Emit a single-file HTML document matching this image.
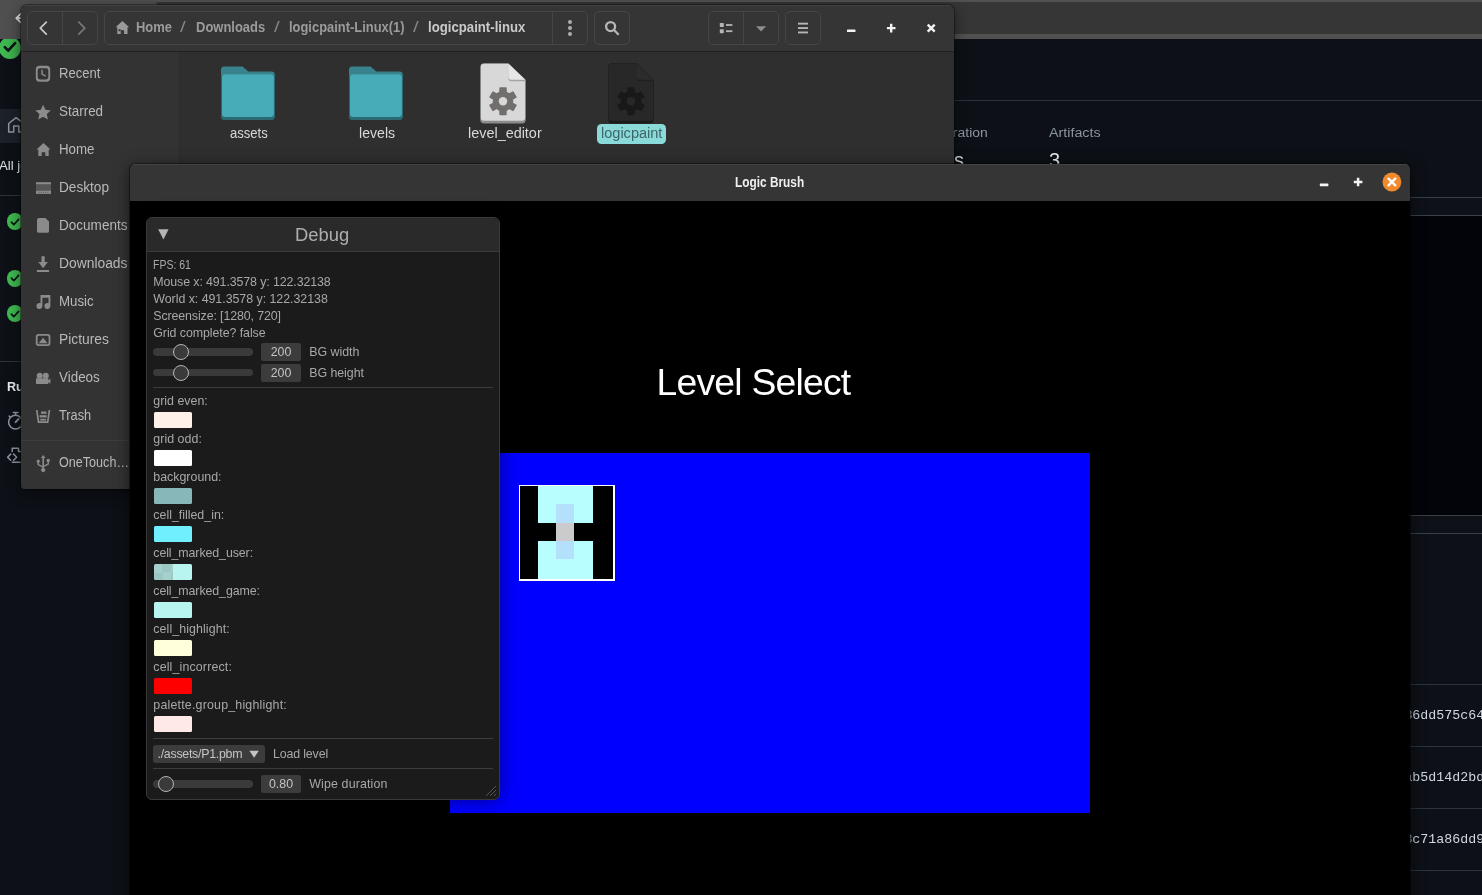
<!DOCTYPE html>
<html lang="en">
<head>
<meta charset="utf-8">
<title>Logic Brush</title>
<style>
html,body{margin:0;padding:0}
body{width:1482px;height:895px;overflow:hidden;position:relative;background:#0d1117;font-family:"Liberation Sans",sans-serif;}
.abs{position:absolute}
#bg,#fm,#lb{will-change:transform}
/* ---------- browser page behind ---------- */
#bg{position:absolute;left:0;top:0;width:1482px;height:895px;overflow:hidden;font-family:"Liberation Sans",sans-serif}
#bg .strip{position:absolute;left:0;top:0;width:1482px;height:39px;background:#363636;border-top:2px solid #515151;border-bottom:5px solid #515151;box-sizing:border-box}
#bg .tab{position:absolute;left:0;top:0;width:158px;height:38.5px;background:#4f4f4f;border-radius:0 8px 0 0}
#bg .hl{position:absolute;height:1px;background:#2d333b}
#bg .mono{position:absolute;font-family:"Liberation Mono",monospace;font-size:13.3px;line-height:16px;color:#d0d7de;white-space:nowrap}
#bg .ok{position:absolute;border-radius:50%;background:#3fb950}
/* ---------- file manager ---------- */
#fm{position:absolute;left:21px;top:5px;width:933px;height:484px;border-radius:6px 6px 4px 4px;background:#2f2f2f;box-shadow:0 0 0 1px rgba(0,0,0,.35),0 4px 14px rgba(0,0,0,.55);overflow:hidden;font-family:"Liberation Sans",sans-serif}
#fm .hdr{position:absolute;left:0;top:0;width:933px;height:46px;background:#353535;border-bottom:1px solid #202020;box-shadow:inset 0 1px 0 #424242}
#fm .btn{position:absolute;top:6px;height:34px;border:1px solid #464646;border-radius:5px;box-sizing:border-box}
#fm .vd{position:absolute;top:7px;width:1px;height:32px;background:#464646}
#fm .side{position:absolute;left:0;top:47px;width:157px;height:437px;background:#333}
#fm .si{position:absolute;left:38px;font-size:14.2px;color:#bdbdbd;white-space:nowrap;line-height:18px}
#fm .pt{position:absolute;top:13px;font-size:14.2px;line-height:18px;color:#a9a9a9;white-space:nowrap;font-weight:bold}
#fm .fl{position:absolute;top:119px;font-size:14.2px;line-height:18px;color:#d6d6d6;white-space:nowrap;transform:translateX(-50%)}
/* ---------- logic brush ---------- */
#lb{position:absolute;left:130px;top:164px;width:1280px;height:760px;border-radius:5px 5px 0 0;background:#000;box-shadow:0 0 0 1px rgba(0,0,0,.4),0 3px 16px rgba(0,0,0,.6);overflow:hidden}
#lb .tb{position:absolute;left:0;top:0;width:1280px;height:37px;background:#353535;box-shadow:inset 0 1px 0 #444}
#lb .ttl{position:absolute;left:0;top:9px;width:1278px;text-align:center;font-size:14.2px;font-weight:bold;color:#ececec;line-height:18px}
#dbg{position:absolute;left:16px;top:53px;width:354px;height:583px;box-sizing:border-box;background:#1b1b1b;border:1px solid #3a3a3a;border-radius:6px;box-shadow:0 0 18px rgba(0,0,0,.45);color:#a8a8a8;font-size:12.4px}
#dbg .dt{position:absolute;left:0;top:0;width:352px;height:33px;background:#2a2a2a;border-bottom:1px solid #3a3a3a;border-radius:5px 5px 0 0}
#dbg .t{position:absolute;left:6px;white-space:nowrap;line-height:16px}
#dbg .sw{position:absolute;left:6.6px;width:38.6px;height:16.6px;border-radius:1.5px}
#dbg .sep{position:absolute;left:6px;width:340px;height:1px;background:#3c3c3c}
#dbg .trk{position:absolute;left:6px;width:100px;height:7.4px;border-radius:4px;background:#3a3a3a}
#dbg .knob{position:absolute;width:14px;height:14px;border-radius:50%;background:#3a3a3a;border:1px solid #b4b4b4}
#dbg .val{position:absolute;left:114px;width:40px;height:17.5px;border-radius:2px;background:#3c3c3c;text-align:center;line-height:18.6px;color:#c4c4c4}
</style>
</head>
<body>
<div id="bg">
  <div class="strip"></div>
  <div class="tab"></div>
  <svg class="abs" style="left:0;top:0" width="40" height="39" viewBox="0 0 40 39"><path d="M21.200 13.400l-5 4.700 5 4.700M16.200 18.100h12" stroke="#dedede" stroke-width="1.700" fill="none" stroke-linecap="round" stroke-linejoin="round"/></svg>
  <div class="abs" style="left:-4px;top:38.500px;width:30px;height:22px;overflow:hidden"><div class="ok" style="left:3px;top:-1.200px;width:22px;height:22px;background:linear-gradient(90deg,#40bb51,#3aa84a)"></div></div>
  <svg class="abs" style="left:0;top:38px" width="24" height="24" viewBox="0 38 24 24"><path d="M4.800 47.200l3.400 3.500 6.900 -7.500" stroke="#0d1117" stroke-width="2.600" fill="none" stroke-linecap="round" stroke-linejoin="round"/></svg>
  <div class="abs" style="left:-8px;top:108.700px;width:60px;height:34px;border-radius:6px;background:#1c2129"></div>
  <svg class="abs" style="left:0;top:110px" width="30" height="30" viewBox="0 110 30 30"><path d="M16.100 117.700l-7.400 5.800v8.600h5v-6.100h5.100v6.100h5v-8.600z" stroke="#8f96a0" stroke-width="1.500" fill="none" stroke-linejoin="round"/></svg>
  <div class="abs" style="left:-1px;top:156.500px;font-size:13.200px;line-height:18px;color:#dfe3e8;white-space:nowrap">All jobs</div>
  <div class="hl" style="left:0;top:195px;width:130px"></div>
  <div class="ok" style="left:6.600px;top:213.4px;width:16.800px;height:16.800px"></div>
  <svg class="abs" style="left:6px;top:212.8px" width="18" height="18" viewBox="-9 -9 18 18"><path d="M-3.600 0.200l2.400 2.500 4.800 -5.300" stroke="#0d1117" stroke-width="1.700" fill="none" stroke-linecap="round" stroke-linejoin="round"/></svg>
  <div class="ok" style="left:6.600px;top:269.8px;width:16.800px;height:16.800px"></div>
  <svg class="abs" style="left:6px;top:269.2px" width="18" height="18" viewBox="-9 -9 18 18"><path d="M-3.600 0.200l2.400 2.500 4.800 -5.300" stroke="#0d1117" stroke-width="1.700" fill="none" stroke-linecap="round" stroke-linejoin="round"/></svg>
  <div class="ok" style="left:6.600px;top:305.2px;width:16.800px;height:16.800px"></div>
  <svg class="abs" style="left:6px;top:304.6px" width="18" height="18" viewBox="-9 -9 18 18"><path d="M-3.600 0.200l2.400 2.500 4.800 -5.300" stroke="#0d1117" stroke-width="1.700" fill="none" stroke-linecap="round" stroke-linejoin="round"/></svg>
  <div class="hl" style="left:0;top:361px;width:130px"></div>
  <div class="abs" style="left:7px;top:378px;font-size:12.600px;line-height:18px;font-weight:bold;color:#e6edf3;white-space:nowrap">Run details</div>
  <svg class="abs" style="left:4px;top:400px" width="30" height="70" viewBox="4 400 30 70"><g stroke="#8d96a0" stroke-width="1.500" fill="none" stroke-linecap="round" stroke-linejoin="round"><circle cx="15.500" cy="422.100" r="6.900"/><path d="M13.300 412.500h4.700M15.600 412.700v2.300M9.200 416.100l0.900 0.900"/><path d="M15.600 422.100l2.800 -3" stroke-width="2.100"/><path d="M10.700 454.100l-3.100 3.100 3.100 3.100M13.600 454.100l3.100 3.100 -3.100 3.100M12.200 451.600v-3.400h6.300v3.300h4M12.400 462.200h10"/></g></svg>
  <div class="hl" style="left:954px;top:100px;width:528px;background:#2b313a"></div>
  <div class="abs" style="left:935.2px;top:123.500px;font-size:12px;line-height:18px;color:#8b949e;white-space:nowrap;transform-origin:0 50%;transform:scaleX(1.163)">Duration</div>
  <div style="position:absolute;left:1048.8px;top:123.5px;font-size:12px;line-height:18px;white-space:nowrap;transform-origin:0 50%;transform:scaleX(1.1902);color:#8b949e;">Artifacts</div>
  <div class="abs" style="left:954.100px;top:147.500px;font-size:20px;line-height:24px;color:#e6edf3;white-space:nowrap">s</div>
  <div class="abs" style="left:1049px;top:147.500px;font-size:20px;line-height:24px;color:#e6edf3;white-space:nowrap">3</div>
  <div class="abs" style="left:1400px;top:197px;width:82px;height:19px;background:#0e1218;border-top:1px solid #3a404a;border-bottom:1px solid #3a404a;box-sizing:border-box"></div>
  <div class="abs" style="left:1400px;top:216px;width:82px;height:299px;background:#020409"></div>
  <div class="abs" style="left:1400px;top:515px;width:82px;height:19px;background:#0e1218;border-top:1px solid #3a404a;border-bottom:1px solid #3a404a;box-sizing:border-box"></div>
  <div class="hl" style="left:1400px;top:684px;width:82px"></div>
  <div class="hl" style="left:1400px;top:746px;width:82px"></div>
  <div class="hl" style="left:1400px;top:808px;width:82px"></div>
  <div class="hl" style="left:1400px;top:870px;width:82px"></div>
  <div class="mono" style="left:1404.400px;top:708.0px">86dd575c64</div>
  <div class="mono" style="left:1404.400px;top:770.1px">ab5d14d2bd</div>
  <div class="mono" style="left:1404.400px;top:832.2px">8c71a86dd9</div>
</div>
<div id="fm">
  <div class="hdr"></div>
  <div class="btn" style="left:6px;width:71px"></div>
  <div class="vd" style="left:41px"></div>
  <div class="btn" style="left:83.2px;width:483.4px"></div>
  <div class="vd" style="left:531px"></div>
  <div class="btn" style="left:573.1px;width:35.5px"></div>
  <div class="btn" style="left:687.2px;width:70.7px"></div>
  <div class="vd" style="left:722px"></div>
  <div class="btn" style="left:764.3px;width:35.3px"></div>
  <svg class="abs" style="left:0;top:0" width="933" height="46" viewBox="21 5 933 46">
  <path d="M46.3 22.2L40.3 28.1l6 6" stroke="#c6c6c6" stroke-width="1.8" fill="none" stroke-linecap="round" stroke-linejoin="round"/>
  <path d="M78.8 22.2l6 5.9-6 6" stroke="#777" stroke-width="1.8" fill="none" stroke-linecap="round" stroke-linejoin="round"/>
  <path d="M122.4 21l6.8 6.3h-1.7v6.7h-3.4v-3.8h-3.4v3.800h-3.400v-6.700h-1.7z" fill="#9a9a9a"/>
  <rect x="118.600" y="29.2" width="2" height="2" fill="#353535"/>
  <circle cx="570" cy="22.100" r="2" fill="#adadad"/><circle cx="570" cy="28" r="2" fill="#adadad"/><circle cx="570" cy="33.900" r="2" fill="#adadad"/>
  <circle cx="610.600" cy="26.600" r="4.500" stroke="#b6b6b6" stroke-width="2.300" fill="none"/>
  <path d="M614 30l4.700 4.700" stroke="#b6b6b6" stroke-width="2.300"/>
  <rect x="719.8" y="23" width="4" height="4" rx="0.6" fill="#b4b4b4"/><rect x="726" y="24.1" width="6.4" height="1.8" fill="#b4b4b4"/>
  <rect x="719.8" y="29.2" width="4" height="4" rx="0.6" fill="#b4b4b4"/><rect x="726" y="30.3" width="6.4" height="1.8" fill="#b4b4b4"/>
  <path d="M756 26.2h10.2l-5.1 5.200z" fill="#8e8e8e"/>
  <rect x="798" y="22.7" width="10" height="1.9" fill="#b4b4b4"/><rect x="798" y="27.1" width="10" height="1.900" fill="#b4b4b4"/><rect x="798" y="31.5" width="10" height="1.900" fill="#b4b4b4"/>
  <rect x="847" y="29.400" width="8.5" height="2.700" rx="0.5" fill="#f2f2f2"/>
  <path d="M886.900 28.100h8.600M891.200 23.800v8.600" stroke="#f2f2f2" stroke-width="2.400"/>
  <path d="M927.700 24.600l7 7M934.700 24.600l-7 7" stroke="#f2f2f2" stroke-width="2.400"/>
</svg>
  <div style="position:absolute;left:114.6px;top:13.2px;font-size:14.2px;line-height:18px;white-space:nowrap;transform-origin:0 50%;transform:scaleX(0.9126);color:#9b9b9b;font-weight:bold;">Home</div>
  <div style="position:absolute;left:159.2px;top:13.2px;font-size:14.2px;line-height:18px;white-space:nowrap;transform-origin:0 50%;transform:scaleX(1.4464);color:#858585;">/</div>
  <div style="position:absolute;left:174.5px;top:13.2px;font-size:14.2px;line-height:18px;white-space:nowrap;transform-origin:0 50%;transform:scaleX(0.9151);color:#9b9b9b;font-weight:bold;">Downloads</div>
  <div style="position:absolute;left:252.5px;top:13.2px;font-size:14.2px;line-height:18px;white-space:nowrap;transform-origin:0 50%;transform:scaleX(1.4464);color:#858585;">/</div>
  <div style="position:absolute;left:267.7px;top:13.2px;font-size:14.2px;line-height:18px;white-space:nowrap;transform-origin:0 50%;transform:scaleX(0.9102);color:#9b9b9b;font-weight:bold;">logicpaint-Linux(1)</div>
  <div style="position:absolute;left:391.9px;top:13.2px;font-size:14.2px;line-height:18px;white-space:nowrap;transform-origin:0 50%;transform:scaleX(1.4464);color:#858585;">/</div>
  <div style="position:absolute;left:406.9px;top:13.2px;font-size:14.2px;line-height:18px;white-space:nowrap;transform-origin:0 50%;transform:scaleX(0.9293);color:#c9c9c9;font-weight:bold;">logicpaint-linux</div>
  <div class="side"></div>
  <div class="abs" style="left:0;top:434.5px;width:157px;height:1px;background:#3d3d3d"></div>
  <div style="position:absolute;left:38.0px;top:59.0px;font-size:14px;line-height:18px;white-space:nowrap;transform-origin:0 50%;transform:scaleX(0.9307);color:#b9b9b9;">Recent</div>
  <div style="position:absolute;left:38.0px;top:97.0px;font-size:14px;line-height:18px;white-space:nowrap;transform-origin:0 50%;transform:scaleX(0.9602);color:#b9b9b9;">Starred</div>
  <div style="position:absolute;left:38.0px;top:135.0px;font-size:14px;line-height:18px;white-space:nowrap;transform-origin:0 50%;transform:scaleX(0.9502);color:#b9b9b9;">Home</div>
  <div style="position:absolute;left:38.0px;top:173.0px;font-size:14px;line-height:18px;white-space:nowrap;transform-origin:0 50%;transform:scaleX(0.9733);color:#b9b9b9;">Desktop</div>
  <div style="position:absolute;left:38.0px;top:211.0px;font-size:14px;line-height:18px;white-space:nowrap;transform-origin:0 50%;transform:scaleX(0.9672);color:#b9b9b9;">Documents</div>
  <div style="position:absolute;left:37.9px;top:249.0px;font-size:14px;line-height:18px;white-space:nowrap;transform-origin:0 50%;transform:scaleX(0.9888);color:#b9b9b9;">Downloads</div>
  <div style="position:absolute;left:38.0px;top:287.0px;font-size:14px;line-height:18px;white-space:nowrap;transform-origin:0 50%;transform:scaleX(0.9487);color:#b9b9b9;">Music</div>
  <div style="position:absolute;left:37.9px;top:325.0px;font-size:14px;line-height:18px;white-space:nowrap;transform-origin:0 50%;transform:scaleX(0.9864);color:#b9b9b9;">Pictures</div>
  <div style="position:absolute;left:38.0px;top:363.0px;font-size:14px;line-height:18px;white-space:nowrap;transform-origin:0 50%;transform:scaleX(0.9584);color:#b9b9b9;">Videos</div>
  <div style="position:absolute;left:38.0px;top:401.0px;font-size:14px;line-height:18px;white-space:nowrap;transform-origin:0 50%;transform:scaleX(0.9126);color:#b9b9b9;">Trash</div>
  <div style="position:absolute;left:38.0px;top:448.0px;font-size:14px;line-height:18px;white-space:nowrap;transform-origin:0 50%;transform:scaleX(0.8993);color:#b9b9b9;">OneTouch…</div>
  <svg class="abs" style="left:0;top:46px" width="60" height="438" viewBox="21 51 60 438">
  <g fill="#8b8b8b">
  <!-- recent -->
  <path d="M39.5 65.800h7a3.700 3.700 0 0 1 3.700 3.700v8.600a3.700 3.700 0 0 1 -3.700 3.700h-7a3.700 3.700 0 0 1 -3.700 -3.700v-8.600a3.700 3.700 0 0 1 3.700 -3.700zM39.800 68.200a2.100 2.100 0 0 0 -2.100 2.100v7a2.100 2.100 0 0 0 2.100 2.100h6.400a2.100 2.100 0 0 0 2.100 -2.100v-7a2.100 2.100 0 0 0 -2.100 -2.100z" fill-rule="evenodd"/>
  <path d="M41.300 69.800h1.500v3.900l3.300 1.700-0.700 1.300-4.100 -2.100z"/>
  <!-- star -->
  <path d="M43.100 104.800l2.300 5 5.400 0.600-4 3.700 1.100 5.400-4.800 -2.700-4.800 2.700 1.100 -5.400-4 -3.700 5.400 -0.600z"/>
  <!-- home -->
  <path d="M43.500 142.900l7 6.500h-1.800v6.700h-3.400v-3.900h-3.600v3.900h-3.400v-6.700h-1.800z"/>
  <!-- desktop -->
  <rect x="36" y="182.200" width="15" height="2.400"/>
  <rect x="36" y="184.600" width="15" height="6" fill="#565656"/>
  <rect x="36" y="190.600" width="15" height="3.300"/>
  <g fill="#565656"><rect x="38.500" y="191.800" width="1" height="1"/><rect x="40.700" y="191.800" width="1" height="1"/><rect x="42.900" y="191.800" width="1" height="1"/><rect x="45.100" y="191.800" width="1" height="1"/><rect x="47.300" y="191.800" width="1" height="1"/></g>
  <!-- documents -->
  <path d="M38.900 218h6.500l3.600 3.600v9.300a1.900 1.900 0 0 1 -1.900 1.900h-8.200a1.900 1.900 0 0 1 -1.900 -1.900v-11a1.900 1.900 0 0 1 1.900 -1.900z"/>
  <!-- downloads -->
  <path d="M41.500 256.200h3.200v5.800h3.200l-4.800 6.200-4.800 -6.200h3.200z"/>
  <rect x="36.900" y="270" width="12.200" height="2"/>
  <!-- music -->
  <path d="M40.500 295h9.900v11a3 3 0 1 1 -1.900 -2.800v-5.400h-6.100v8.200a3 3 0 1 1 -1.900 -2.800z"/>
  <!-- pictures -->
  <path d="M38.600 334h9a2.800 2.800 0 0 1 2.800 2.800v6.400a2.800 2.800 0 0 1 -2.800 2.800h-9a2.800 2.800 0 0 1 -2.800 -2.800v-6.400a2.800 2.800 0 0 1 2.800 -2.800zM38.900 335.800a1.300 1.300 0 0 0 -1.300 1.300v5.800a1.300 1.300 0 0 0 1.300 1.300h8.400a1.300 1.300 0 0 0 1.300 -1.300v-5.800a1.300 1.300 0 0 0 -1.300 -1.300z" fill-rule="evenodd"/>
  <path d="M38.600 343.200l4.500 -5.500 4.500 5.500z"/>
  <!-- videos -->
  <circle cx="39.700" cy="375.800" r="3"/><circle cx="45.800" cy="375.800" r="3"/>
  <path d="M36 378.300h12.300v1.900l2.100 -1.700v5.300l-2.100 -1.700v1.800h-12.300z"/>
  <!-- trash -->
  <path d="M35.900 410h1.700l1.700 11.300h7.600l1.700 -11.300h1.700l-1.900 13h-10.600z"/>
  <rect x="41" y="411.500" width="5.500" height="2.300"/><rect x="39.600" y="415.200" width="7" height="2.300"/><rect x="40.200" y="418.800" width="5.800" height="1.800"/>
  <!-- usb -->
  <path d="M43.200 455l2.300 3.100h-1.500v7.300l3.600 -1.900v-1.500h-0.900v-3h3v3h-0.800v2.400l-4.900 2.700v1.100a2 2 0 1 1 -1.600 0v-0.600l-4.900 -2.500v-2.300a1.600 1.600 0 1 1 1.500 0v1.400l3.400 1.800v-7.900h-1.500z"/>
  </g>
</svg>
  <svg class="abs" style="left:199.7px;top:60.5px" width="54.3" height="54.3" viewBox="0 0 55 55">
  <path d="M0 4a3.500 3.500 0 0 1 3.500 -3.500h18.300l5.800 5h23.400a3.500 3.500 0 0 1 3.500 3.500v42a3.500 3.500 0 0 1 -3.500 3.500h-47.500a3.500 3.500 0 0 1 -3.500 -3.500z" fill="#38838d"/>
  <path d="M0 12a3.500 3.500 0 0 1 3.500 -3.500h47.500a3.500 3.500 0 0 1 3.500 3.500v39a3.500 3.500 0 0 1 -3.500 3.500h-47.500a3.500 3.500 0 0 1 -3.500 -3.500z" fill="#2c6a73"/>
  <path d="M1 11.700a3.300 3.300 0 0 1 3.300 -3.300h46a3.300 3.300 0 0 1 3.300 3.300v36.700a3.300 3.300 0 0 1 -3.300 3.300h-46a3.300 3.300 0 0 1 -3.300 -3.300z" fill="#47abb8"/>
</svg>
  <svg class="abs" style="left:327.7px;top:60.5px" width="54.3" height="54.3" viewBox="0 0 55 55">
  <path d="M0 4a3.500 3.500 0 0 1 3.500 -3.500h18.300l5.800 5h23.400a3.500 3.500 0 0 1 3.500 3.500v42a3.500 3.500 0 0 1 -3.500 3.500h-47.500a3.500 3.500 0 0 1 -3.500 -3.500z" fill="#38838d"/>
  <path d="M0 12a3.500 3.500 0 0 1 3.500 -3.500h47.500a3.500 3.500 0 0 1 3.500 3.500v39a3.500 3.500 0 0 1 -3.500 3.500h-47.500a3.500 3.500 0 0 1 -3.500 -3.500z" fill="#2c6a73"/>
  <path d="M1 11.700a3.300 3.300 0 0 1 3.300 -3.300h46a3.300 3.300 0 0 1 3.300 3.300v36.700a3.300 3.300 0 0 1 -3.300 3.300h-46a3.300 3.300 0 0 1 -3.300 -3.300z" fill="#47abb8"/>
</svg>
  <svg class="abs" style="left:458.8px;top:57.8px" width="47" height="61" viewBox="0 0 47 61">
  <path d="M0.300 4a3.700 3.700 0 0 1 3.700 -3.700h24.500l17.200 16.500v40a3.700 3.700 0 0 1 -3.700 3.700h-38a3.700 3.700 0 0 1 -3.700 -3.700z" fill="#8c8c8c"/>
  <path d="M0.800 4.100a3.300 3.300 0 0 1 3.300 -3.300h24.200l16.900 16.200v37.500a3.300 3.300 0 0 1 -3.300 3.300h-37.800a3.300 3.300 0 0 1 -3.300 -3.300z" fill="#d8d8d8"/>
  <path d="M28.300 0.800v14.500a3 3 0 0 0 3 3h13.900v-1.300z" fill="#a4a4a4"/>
  <path d="M28.300 0.800v12.900a3 3 0 0 0 3 3h13.900z" fill="#e6e6e6"/>
  <g transform="translate(23 38.200)" fill="#726e6e">
    <circle r="10.300"/>
    <rect x="-3.700" y="-14" width="7.400" height="6" rx="0.800"/>
    <rect x="-3.700" y="-14" width="7.400" height="6" rx="0.800" transform="rotate(60)"/>
    <rect x="-3.700" y="-14" width="7.400" height="6" rx="0.800" transform="rotate(120)"/>
    <rect x="-3.700" y="-14" width="7.400" height="6" rx="0.800" transform="rotate(180)"/>
    <rect x="-3.700" y="-14" width="7.400" height="6" rx="0.800" transform="rotate(240)"/>
    <rect x="-3.700" y="-14" width="7.400" height="6" rx="0.800" transform="rotate(300)"/>
    <circle r="4.200" fill="#d8d8d8"/>
  </g>
</svg>
  <svg class="abs" style="left:586.8px;top:57.8px" width="47" height="61" viewBox="0 0 47 61">
  <path d="M0.300 4a3.700 3.700 0 0 1 3.700 -3.700h24.500l17.200 16.500v40a3.700 3.700 0 0 1 -3.700 3.700h-38a3.700 3.700 0 0 1 -3.700 -3.700z" fill="#1c1c1c"/>
  <path d="M0.800 4.100a3.300 3.300 0 0 1 3.300 -3.300h24.200l16.900 16.200v37.500a3.300 3.300 0 0 1 -3.300 3.300h-37.800a3.300 3.300 0 0 1 -3.300 -3.300z" fill="#282828"/>
  <path d="M28.300 0.800v14.500a3 3 0 0 0 3 3h13.900v-1.300z" fill="#202020"/>
  <path d="M28.300 0.800v12.900a3 3 0 0 0 3 3h13.900z" fill="#2c2c2c"/>
  <g transform="translate(23 38.200)" fill="#191919">
    <circle r="10.300"/>
    <rect x="-3.700" y="-14" width="7.400" height="6" rx="0.800"/>
    <rect x="-3.700" y="-14" width="7.400" height="6" rx="0.800" transform="rotate(60)"/>
    <rect x="-3.700" y="-14" width="7.400" height="6" rx="0.800" transform="rotate(120)"/>
    <rect x="-3.700" y="-14" width="7.400" height="6" rx="0.800" transform="rotate(180)"/>
    <rect x="-3.700" y="-14" width="7.400" height="6" rx="0.800" transform="rotate(240)"/>
    <rect x="-3.700" y="-14" width="7.400" height="6" rx="0.800" transform="rotate(300)"/>
    <circle r="4.200" fill="#282828"/>
  </g>
</svg>
  <div style="position:absolute;left:208.9px;top:119.3px;font-size:14px;line-height:18px;white-space:nowrap;transform-origin:0 50%;transform:scaleX(0.9314);color:#d8d8d8;">assets</div>
  <div style="position:absolute;left:337.5px;top:119.3px;font-size:14px;line-height:18px;white-space:nowrap;transform-origin:0 50%;transform:scaleX(1.0082);color:#d8d8d8;">levels</div>
  <div style="position:absolute;left:446.8px;top:119.3px;font-size:14px;line-height:18px;white-space:nowrap;transform-origin:0 50%;transform:scaleX(1.0291);color:#d8d8d8;">level_editor</div>
  <div class="abs" style="left:575.9px;top:119px;width:69.100px;height:20px;border-radius:4.500px;background:#8adada"></div>
  <div style="position:absolute;left:580.4px;top:119.3px;font-size:14px;line-height:18px;white-space:nowrap;transform-origin:0 50%;transform:scaleX(1.0377);color:#3d666a;">logicpaint</div>
</div>
<div id="lb">
  <div class="tb"></div>
<div style="position:absolute;left:604.7px;top:9.0px;font-size:14.2px;line-height:18px;white-space:nowrap;transform-origin:0 50%;transform:scaleX(0.8354);color:#efefef;font-weight:bold;">Logic Brush</div>
  <svg class="abs" style="left:1180px;top:0" width="100" height="37" viewBox="0 0 100 37">
    <rect x="9.8" y="19.5" width="8.6" height="2.7" rx="0.6" fill="#f4f4f4"/>
    <path d="M43.800 18h8.600M48.100 13.700v8.600" stroke="#f4f4f4" stroke-width="2.500" fill="none"/>
    <circle cx="81.9" cy="18" r="9.4" fill="#f08a2c"/>
    <path d="M78.5 14.6l6.8 6.8M85.3 14.6l-6.8 6.8" stroke="#fff" stroke-width="2.3" stroke-linecap="round" fill="none"/>
  </svg>
  <div class="abs" id="lvl" style="left:423.5px;top:196px;width:400px;text-align:center;font-size:37.3px;line-height:44px;color:#fff;letter-spacing:-0.78px;white-space:nowrap">Level Select</div>
  <div class="abs" style="left:320px;top:289px;width:640px;height:360px;background:#0000ff"></div>
  <div class="abs" id="thumb" style="left:389px;top:321px;width:96px;height:96px;box-sizing:border-box;border:solid #fff;border-width:1px 2px 2px 1px;background:#000">
    <div class="abs" style="left:18px;top:0;width:55px;height:93px;background:#b8fefe"></div>
    <div class="abs" style="left:0;top:37px;width:93px;height:18px;background:#000"></div>
    <div class="abs" style="left:36px;top:18px;width:18px;height:55px;background:#b4e0fc"></div>
    <div class="abs" style="left:36px;top:37px;width:18px;height:18px;background:#cbcbcb"></div>
  </div>
  <div id="dbg">
    <div class="dt"></div>
    <svg class="abs" style="left:10px;top:10px" width="14" height="14" viewBox="0 0 14 14"><path d="M1.2 1.3h10.4L6.4 11.6z" fill="#b4b4b4"/></svg>
    <div style="position:absolute;left:148.3px;top:5.9px;font-size:17.6px;line-height:22px;white-space:nowrap;transform-origin:0 50%;transform:scaleX(1.0458);color:#aeaeae;">Debug</div>
    <div class="t" style="left:6.3px;top:38.6px;transform-origin:0 50%;transform:scaleX(0.846);">FPS: 61</div>
    <div class="t" style="left:6.3px;top:55.7px;letter-spacing:-0.107px;">Mouse x: 491.3578 y: 122.32138</div>
    <div class="t" style="left:6.3px;top:72.8px;letter-spacing:-0.033px;">World x: 491.3578 y: 122.32138</div>
    <div class="t" style="left:6.3px;top:89.7px;letter-spacing:-0.117px;">Screensize: [1280, 720]</div>
    <div class="t" style="left:6.3px;top:106.6px;letter-spacing:-0.07px;">Grid complete? false</div>
    <div class="trk" style="top:130.3px"></div>
    <div class="knob" style="left:26.0px;top:126.0px"></div>
    <div class="val" style="top:125.3px">200</div>
    <div class="t" style="left:162.2px;top:126.0px;">BG width</div>
    <div class="trk" style="top:151.1px"></div>
    <div class="knob" style="left:26.0px;top:146.8px"></div>
    <div class="val" style="top:146.1px">200</div>
    <div class="t" style="left:162.2px;top:146.8px;letter-spacing:-0.04px;">BG height</div>
    <div class="sep" style="top:169px"></div>
    <div class="t" style="left:6.3px;top:174.7px;">grid even:</div>
    <div class="sw" style="top:193.8px;background:#fff0e8"></div>
    <div class="t" style="left:6.3px;top:212.7px;letter-spacing:0.04px;">grid odd:</div>
    <div class="sw" style="top:231.8px;background:#ffffff"></div>
    <div class="t" style="left:6.3px;top:250.7px;">background:</div>
    <div class="sw" style="top:269.8px;background:#87b7b9"></div>
    <div class="t" style="left:6.3px;top:288.7px;">cell_filled_in:</div>
    <div class="sw" style="top:307.8px;background:#70f0ff"></div>
    <div class="t" style="left:6.3px;top:326.7px;letter-spacing:-0.09px;">cell_marked_user:</div>
    <div class="sw" style="top:345.8px;background:linear-gradient(90deg,transparent 50%,#b8f4f0 50%),repeating-conic-gradient(#9cc8c4 0 25%,#a5d1cd 0 50%) 0 0/17px 17px"></div>
    <div class="t" style="left:6.3px;top:364.7px;letter-spacing:-0.09px;">cell_marked_game:</div>
    <div class="sw" style="top:383.8px;background:#b8f4f0"></div>
    <div class="t" style="left:6.3px;top:402.7px;letter-spacing:0.09px;">cell_highlight:</div>
    <div class="sw" style="top:421.8px;background:#ffffdc"></div>
    <div class="t" style="left:6.3px;top:440.7px;letter-spacing:0.15px;">cell_incorrect:</div>
    <div class="sw" style="top:459.8px;background:#ff0000"></div>
    <div class="t" style="left:6.3px;top:478.7px;letter-spacing:0.2px;">palette.group_highlight:</div>
    <div class="sw" style="top:497.8px;background:#ffe8e8"></div>
    <div class="sep" style="top:520px"></div>
    <div class="abs" id="combo" style="left:6.3px;top:527.3px;width:112px;height:17.5px;border-radius:3px;background:#3c3c3c"></div>
    <div class="t" style="left:10.5px;top:527.8px;letter-spacing:-0.27px;color:#c4c4c4;">./assets/P1.pbm</div>
    <svg class="abs" style="left:101px;top:531px" width="12" height="10" viewBox="0 0 12 10"><path d="M1.4 1.8h9.4L6.1 8.7z" fill="#c4c4c4"/></svg>
    <div class="t" style="left:126.0px;top:527.8px;letter-spacing:-0.15px;">Load level</div>
    <div class="sep" style="top:550px"></div>
    <div class="trk" style="top:562.3px"></div>
    <div class="knob" style="left:10.7px;top:558.0px"></div>
    <div class="val" style="top:557.3px">0.80</div>
    <div class="t" style="left:162.2px;top:558.0px;letter-spacing:0.15px;">Wipe duration</div>
    <svg class="abs" style="left:337px;top:566px" width="14" height="14" viewBox="0 0 14 14"><path d="M2 12L12 2M6 12l6-6M10 12l2-2" stroke="#555" stroke-width="1" fill="none"/></svg>
  </div>
</div>
</body>
</html>
